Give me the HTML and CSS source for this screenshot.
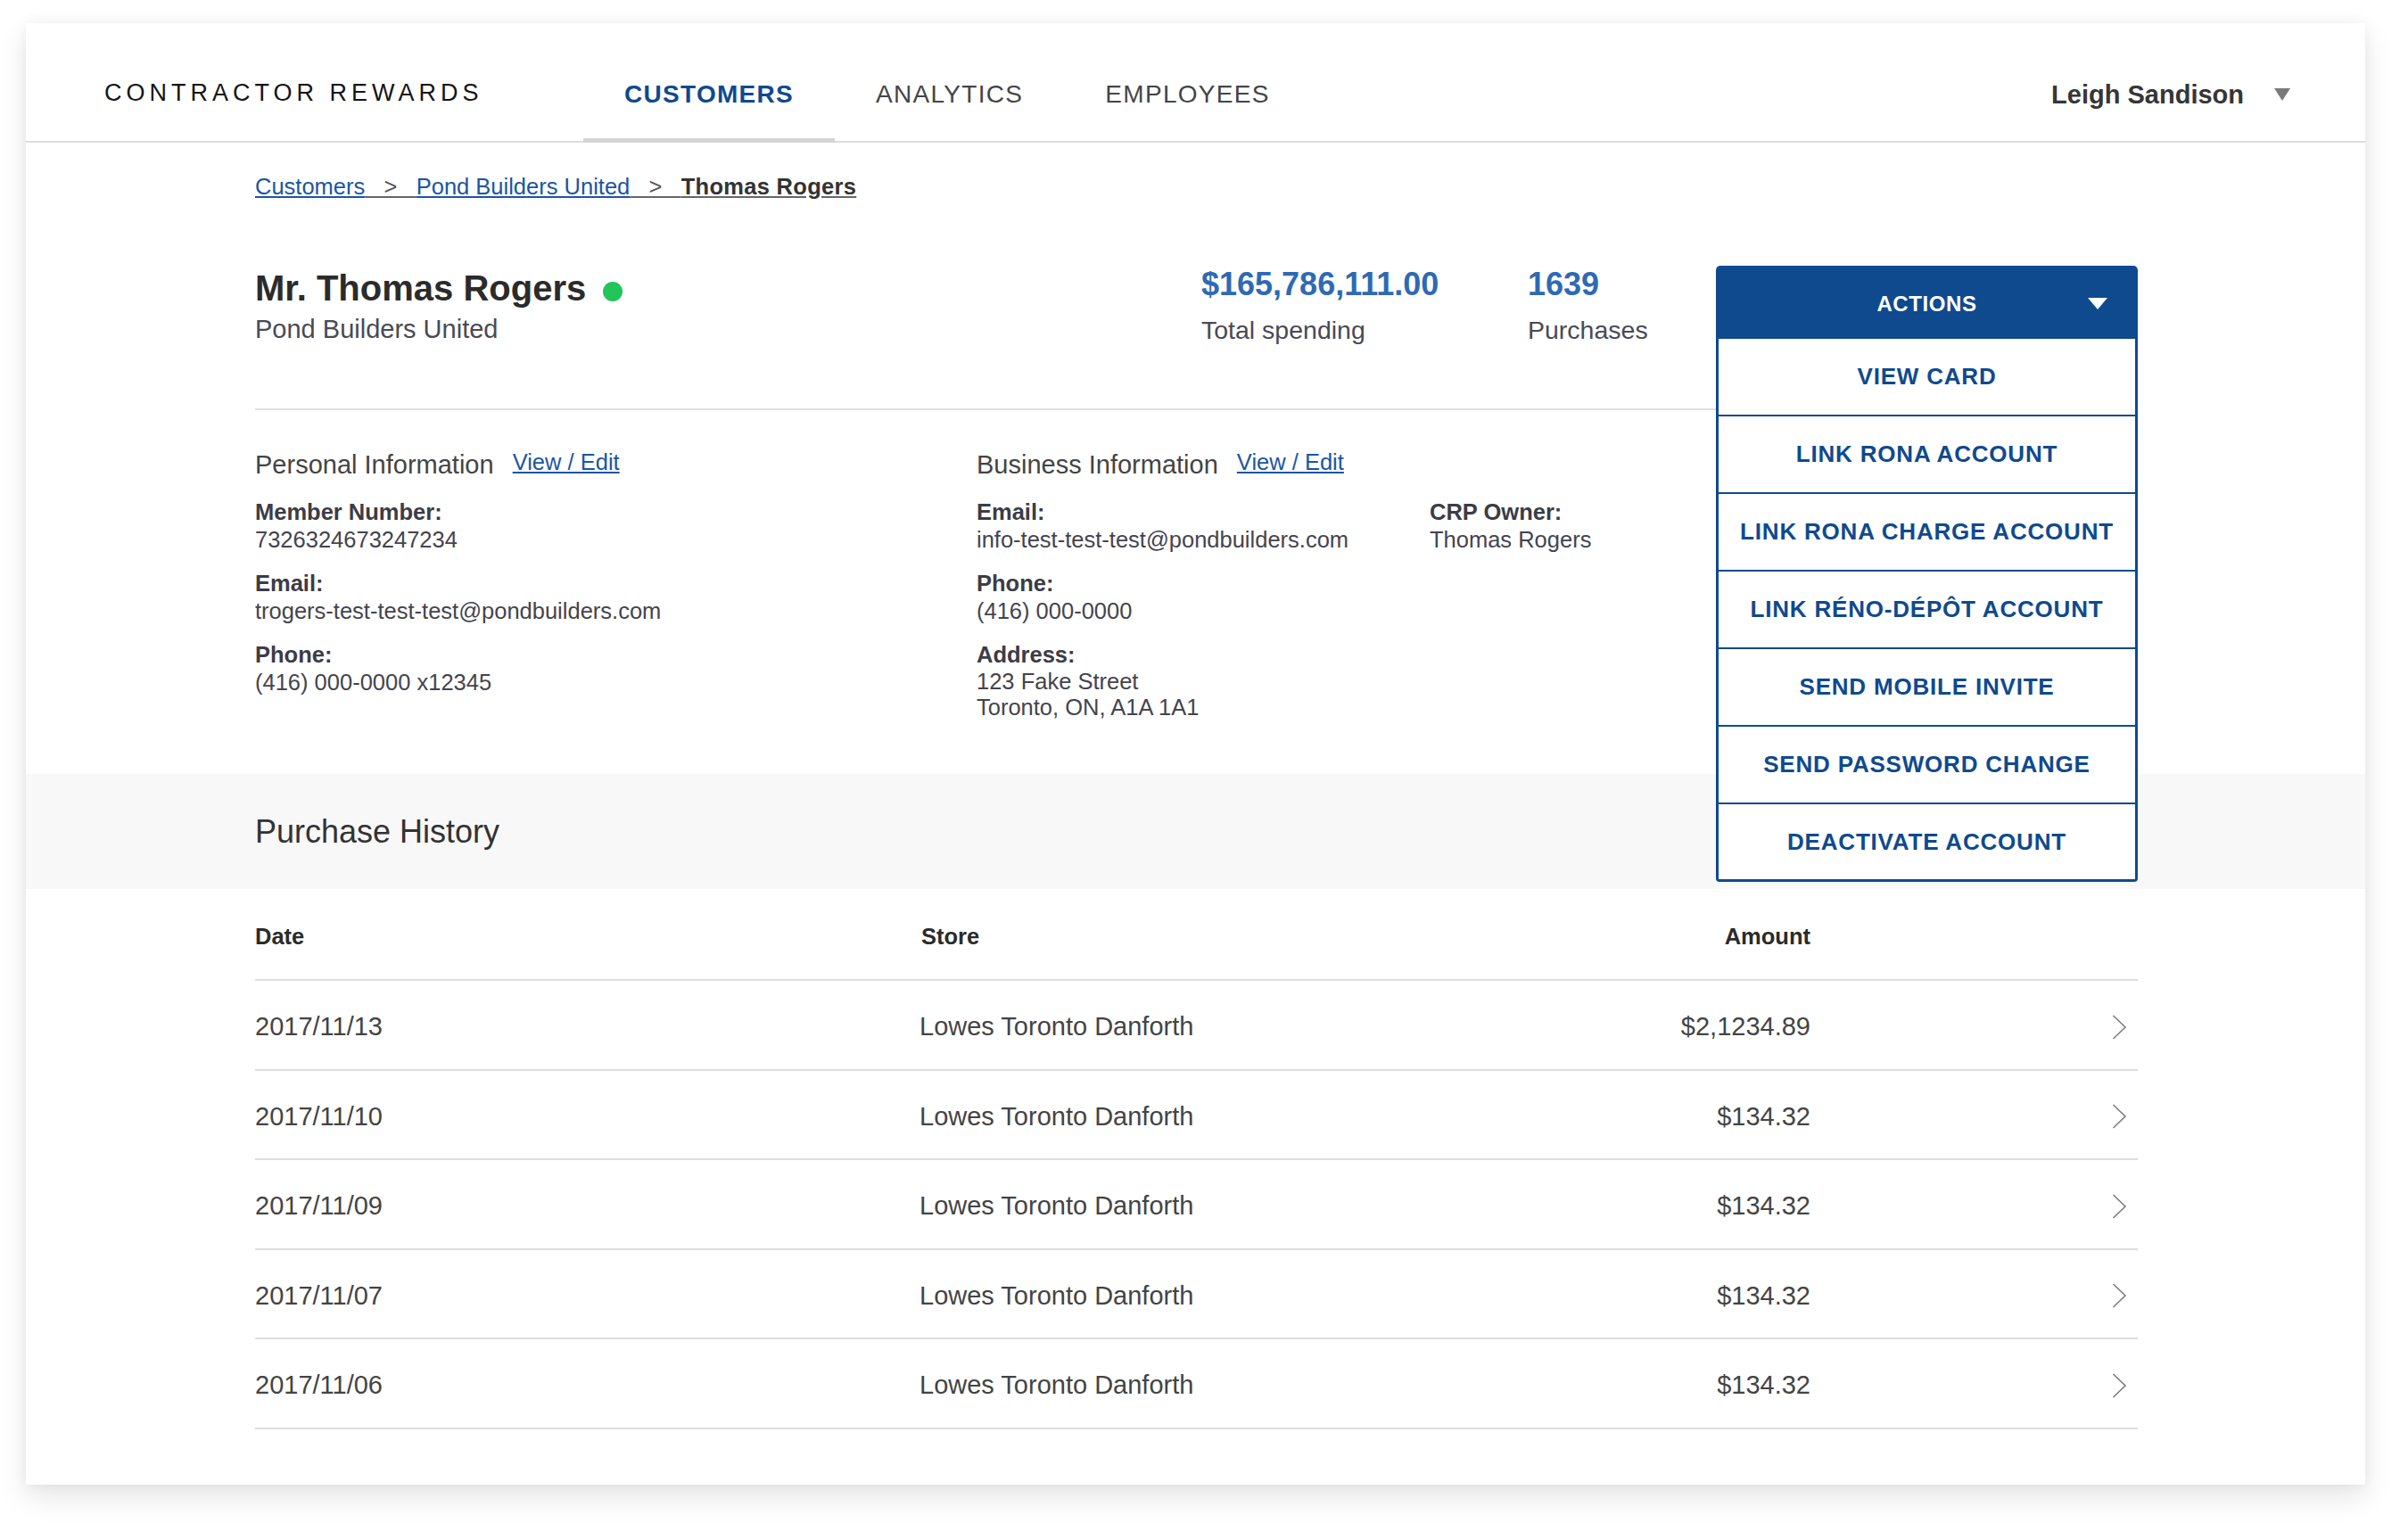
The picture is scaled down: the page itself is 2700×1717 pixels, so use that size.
FILE: index.html
```html
<!DOCTYPE html>
<html lang="en">
<head>
<meta charset="utf-8">
<title>Contractor Rewards – Thomas Rogers</title>
<link rel="stylesheet" href="styles.css">
</head>
<body>
<div class="page">
  <div class="card">
    <header class="topbar">
      <div class="brand">CONTRACTOR REWARDS</div>
      <nav class="tabs">
        <a class="tab active">CUSTOMERS</a>
        <a class="tab">ANALYTICS</a>
        <a class="tab">EMPLOYEES</a>
      </nav>
      <div class="user">
        <span class="user-name">Leigh Sandison</span>
        <svg class="user-caret" width="18" height="14" viewBox="0 0 18 14"><polygon points="0,0 18,0 9,14" fill="#7a7a7a"/></svg>
      </div>
    </header>

    <section class="content">
      <div class="breadcrumb">
        <a class="crumb-link">Customers</a><span class="crumb-sep">&nbsp;&nbsp;&nbsp;&gt;&nbsp;&nbsp;&nbsp;</span><a class="crumb-link">Pond Builders United</a><span class="crumb-sep">&nbsp;&nbsp;&nbsp;&gt;&nbsp;&nbsp;&nbsp;</span><span class="crumb-current">Thomas Rogers</span>
      </div>

      <div class="profile">
        <div class="who">
          <h1 class="name">Mr. Thomas Rogers <span class="dot"></span></h1>
          <div class="company">Pond Builders United</div>
        </div>
        <div class="stat stat-spend">
          <div class="stat-value">$165,786,111.00</div>
          <div class="stat-label">Total spending</div>
        </div>
        <div class="stat stat-count">
          <div class="stat-value">1639</div>
          <div class="stat-label">Purchases</div>
        </div>
        <div class="actions">
          <div class="actions-btn">
            <span class="actions-title">ACTIONS</span>
            <svg class="actions-caret" width="22" height="13" viewBox="0 0 22 13"><polygon points="0,0 22,0 11,13" fill="#ffffff"/></svg>
          </div>
          <ul class="actions-menu">
            <li class="actions-item">VIEW CARD</li>
            <li class="actions-item">LINK RONA ACCOUNT</li>
            <li class="actions-item">LINK RONA CHARGE ACCOUNT</li>
            <li class="actions-item">LINK RÉNO-DÉPÔT ACCOUNT</li>
            <li class="actions-item">SEND MOBILE INVITE</li>
            <li class="actions-item">SEND PASSWORD CHANGE</li>
            <li class="actions-item">DEACTIVATE ACCOUNT</li>
          </ul>
        </div>
      </div>

      <div class="info">
        <div class="info-col personal">
          <div class="info-title">Personal Information <a class="edit-link">View / Edit</a></div>
          <div class="field">
            <div class="field-label">Member Number:</div>
            <div class="field-value">7326324673247234</div>
          </div>
          <div class="field">
            <div class="field-label">Email:</div>
            <div class="field-value">trogers-test-test-test@pondbuilders.com</div>
          </div>
          <div class="field">
            <div class="field-label">Phone:</div>
            <div class="field-value">(416) 000-0000 x12345</div>
          </div>
        </div>
        <div class="info-col business">
          <div class="info-title">Business Information <a class="edit-link">View / Edit</a></div>
          <div class="business-grid">
            <div class="business-main">
              <div class="field">
                <div class="field-label">Email:</div>
                <div class="field-value">info-test-test-test@pondbuilders.com</div>
              </div>
              <div class="field">
                <div class="field-label">Phone:</div>
                <div class="field-value">(416) 000-0000</div>
              </div>
              <div class="field">
                <div class="field-label">Address:</div>
                <div class="field-value address">123 Fake Street<br>Toronto, ON, A1A 1A1</div>
              </div>
            </div>
            <div class="business-side">
              <div class="field">
                <div class="field-label">CRP Owner:</div>
                <div class="field-value">Thomas Rogers</div>
              </div>
            </div>
          </div>
        </div>
      </div>
    </section>

    <section class="band">
      <h2 class="band-title">Purchase History</h2>
    </section>

    <section class="history">
      <div class="table">
        <div class="row head">
          <div class="cell">Date</div>
          <div class="cell">Store</div>
          <div class="cell amount">Amount</div>
          <div class="cell"></div>
        </div>
        <div class="row">
          <div class="cell">2017/11/13</div>
          <div class="cell">Lowes Toronto Danforth</div>
          <div class="cell amount">$2,1234.89</div>
          <div class="cell chev"><svg width="17" height="28" viewBox="0 0 17 28"><polyline points="1.5,1 15,14 1.5,27" fill="none" stroke="#7d7d7d" stroke-width="1.6"/></svg></div>
        </div>
        <div class="row">
          <div class="cell">2017/11/10</div>
          <div class="cell">Lowes Toronto Danforth</div>
          <div class="cell amount">$134.32</div>
          <div class="cell chev"><svg width="17" height="28" viewBox="0 0 17 28"><polyline points="1.5,1 15,14 1.5,27" fill="none" stroke="#7d7d7d" stroke-width="1.6"/></svg></div>
        </div>
        <div class="row">
          <div class="cell">2017/11/09</div>
          <div class="cell">Lowes Toronto Danforth</div>
          <div class="cell amount">$134.32</div>
          <div class="cell chev"><svg width="17" height="28" viewBox="0 0 17 28"><polyline points="1.5,1 15,14 1.5,27" fill="none" stroke="#7d7d7d" stroke-width="1.6"/></svg></div>
        </div>
        <div class="row">
          <div class="cell">2017/11/07</div>
          <div class="cell">Lowes Toronto Danforth</div>
          <div class="cell amount">$134.32</div>
          <div class="cell chev"><svg width="17" height="28" viewBox="0 0 17 28"><polyline points="1.5,1 15,14 1.5,27" fill="none" stroke="#7d7d7d" stroke-width="1.6"/></svg></div>
        </div>
        <div class="row">
          <div class="cell">2017/11/06</div>
          <div class="cell">Lowes Toronto Danforth</div>
          <div class="cell amount">$134.32</div>
          <div class="cell chev"><svg width="17" height="28" viewBox="0 0 17 28"><polyline points="1.5,1 15,14 1.5,27" fill="none" stroke="#7d7d7d" stroke-width="1.6"/></svg></div>
        </div>
      </div>
    </section>
  </div>
</div>
</body>
</html>
```

FILE: styles.css
```css
* { box-sizing: border-box; }

html, body {
  margin: 0;
  padding: 0;
  background: #ffffff;
}

body {
  font-family: "Liberation Sans", Arial, Helvetica, sans-serif;
  color: #444;
}

.page {
  padding: 26px 0 60px 29px;
}

.card {
  width: 2623px;
  background: #ffffff;
  box-shadow: 0 14px 30px rgba(0, 0, 0, 0.10), 0 0 14px rgba(0, 0, 0, 0.05);
}

/* ---------- top bar ---------- */
.topbar {
  display: flex;
  align-items: stretch;
  height: 134px;
  padding: 30px 84px 0 88px;
  border-bottom: 2px solid #dcdcdc;
}

.brand {
  flex: 0 0 537px;
  display: flex;
  align-items: center;
  font-size: 27px;
  letter-spacing: 5px;
  color: #151515;
  padding-bottom: 6px;
}

.tabs {
  display: flex;
  align-items: stretch;
  margin-bottom: -2px;
}

.tab {
  display: flex;
  align-items: center;
  padding: 0 46px;
  font-size: 28px;
  letter-spacing: 1.3px;
  color: #454545;
  border-bottom: 5px solid transparent;
}

.tab.active {
  color: #0f4a8e;
  font-weight: bold;
  border-bottom-color: #d4d4d4;
}

.user {
  margin-left: auto;
  display: flex;
  align-items: center;
  gap: 34px;
  padding-bottom: 2px;
}

.user-name {
  font-size: 29px;
  font-weight: bold;
  color: #363636;
}

/* ---------- content ---------- */
.content {
  padding: 34px 255px 60px 257px;
}

.breadcrumb {
  font-size: 25.5px;
  line-height: 30px;
  white-space: nowrap;
}

.crumb-link {
  color: #1c55a3;
  text-decoration: underline;
  text-decoration-color: #1c55a3;
}

.crumb-sep {
  color: #555;
  text-decoration: underline;
  text-decoration-color: #666;
}

.crumb-current {
  color: #333;
  font-weight: bold;
  letter-spacing: 0.3px;
  text-decoration: underline;
  text-decoration-color: #666;
}

.profile {
  display: flex;
  align-items: flex-start;
  margin-top: 74px;
  padding-bottom: 71px;
  border-bottom: 2px solid #e0e0e0;
}

.who {
  flex: 1 1 auto;
}

.name {
  margin: 2px 0 0 0;
  font-size: 40px;
  line-height: 47px;
  font-weight: bold;
  color: #2b2b2b;
  display: flex;
  align-items: center;
}

.dot {
  display: inline-block;
  width: 22px;
  height: 22px;
  border-radius: 50%;
  background: #22c55a;
  margin-left: 19px;
  margin-top: 6px;
}

.company {
  margin-top: 5px;
  font-size: 29px;
  line-height: 34px;
  color: #4a4a54;
}

.stat-spend { flex: 0 0 366px; }
.stat-count { flex: 0 0 211px; }

.stat-value {
  font-size: 36px;
  line-height: 42px;
  font-weight: bold;
  color: #2e6ab3;
}

.stat-label {
  margin-top: 13px;
  font-size: 28.5px;
  line-height: 34px;
  color: #4a4a54;
}

/* ---------- actions dropdown ---------- */
.actions {
  flex: 0 0 473px;
  position: relative;
}

.actions-btn {
  height: 82px;
  background: #0f4a8e;
  border-radius: 5px 5px 0 0;
  display: flex;
  align-items: center;
  justify-content: center;
  padding-top: 4px;
  position: relative;
}

.actions-title {
  color: #ffffff;
  font-size: 24px;
  font-weight: bold;
  letter-spacing: 0.6px;
}

.actions-caret {
  position: absolute;
  right: 34px;
  top: 36px;
}

.actions-menu {
  position: absolute;
  top: 82px;
  left: 0;
  right: 0;
  margin: 0;
  padding: 0;
  list-style: none;
  background: #ffffff;
  border: 3px solid #0f4a8e;
  border-top: 0;
  border-radius: 0 0 4px 4px;
  z-index: 5;
}

.actions-item {
  height: 87px;
  display: flex;
  align-items: center;
  justify-content: center;
  font-size: 26px;
  font-weight: bold;
  letter-spacing: 0.8px;
  color: #0f4a8e;
  border-bottom: 2px solid #0f4a8e;
  white-space: nowrap;
}

.actions-item:last-child {
  border-bottom: 0;
  height: 84px;
}

/* ---------- info ---------- */
.info {
  display: flex;
  padding-top: 41px;
}

.personal {
  flex: 0 0 809px;
}

.business {
  flex: 1 1 auto;
}

.info-title {
  font-size: 29px;
  line-height: 34px;
  color: #444;
  white-space: nowrap;
}

.edit-link {
  font-size: 25.5px;
  color: #1c55a3;
  text-decoration: underline;
  margin-left: 13px;
  vertical-align: 4px;
}

.field {
  margin-top: 18px;
}

.info-title + .field,
.business-grid .field:first-child {
  margin-top: 21px;
}

.field-label {
  font-size: 25.5px;
  line-height: 31px;
  font-weight: bold;
  color: #3c3c46;
}

.field-value {
  font-size: 25.5px;
  line-height: 31px;
  color: #44444e;
}

.field-value.address {
  line-height: 29px;
}

.business-grid {
  display: grid;
  grid-template-columns: 508px auto;
}

/* ---------- purchase history ---------- */
.band {
  height: 129px;
  background: #f8f8f8;
  display: flex;
  align-items: center;
  padding-left: 257px;
}

.band-title {
  margin: 0;
  font-size: 36px;
  font-weight: normal;
  color: #333;
}

.history {
  padding: 0 255px 62px 257px;
}

.row {
  display: grid;
  grid-template-columns: 745px 1fr 250px 367px;
  align-items: center;
  height: 100.5px;
  padding-top: 5px;
  border-bottom: 2px solid #dedede;
  font-size: 29px;
  color: #444;
}

.row.head {
  height: auto;
  padding: 38px 0 33px 0;
  font-size: 25.5px;
  line-height: 30px;
  font-weight: bold;
  color: #2b2b2b;
}

.row.head .cell:nth-child(2) {
  padding-left: 2px;
}

.amount {
  text-align: right;
}

.chev {
  display: flex;
  justify-content: flex-end;
  padding-right: 12px;
}
```
